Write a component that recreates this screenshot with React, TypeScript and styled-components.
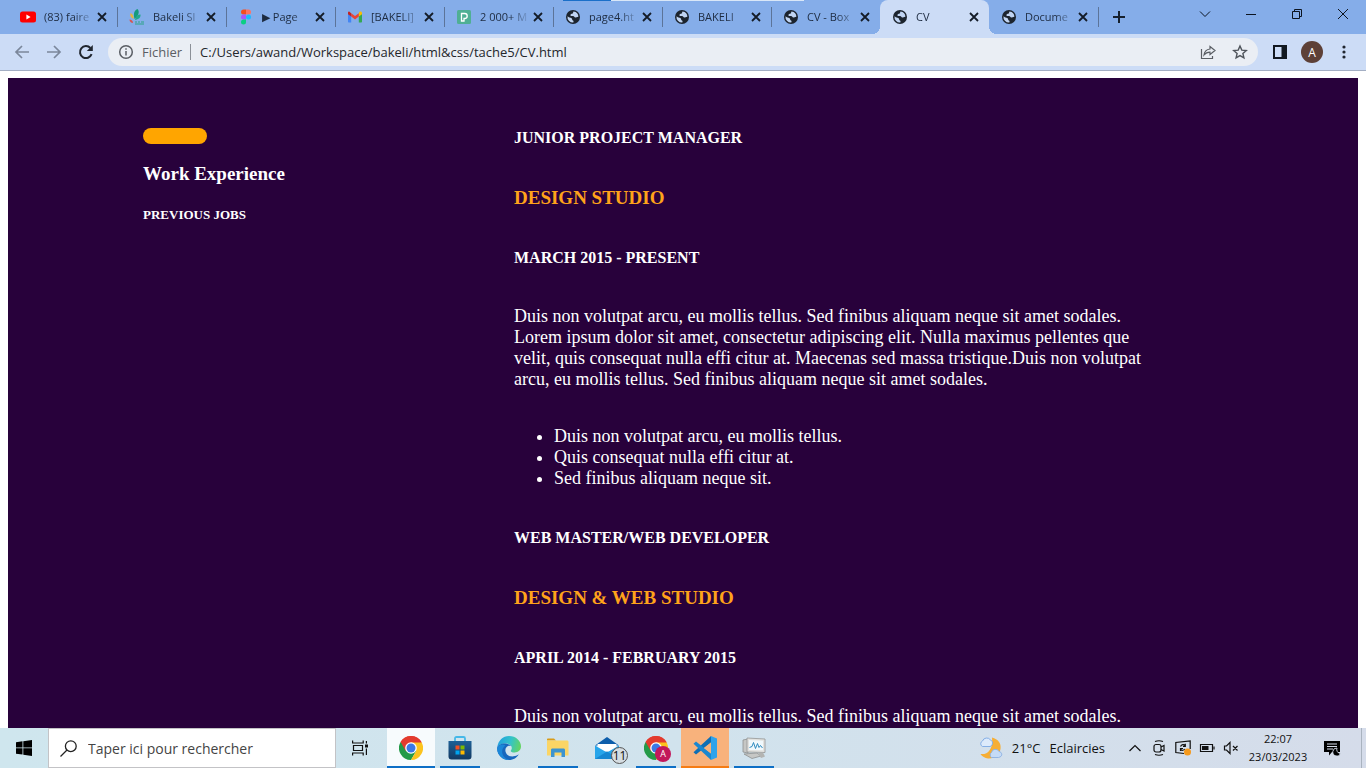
import React from "react";
import styled, { createGlobalStyle, css } from "styled-components";

const GlobalStyle = createGlobalStyle`
  *, *::before, *::after { box-sizing: border-box; }
  body { margin: 0; background: #fff; overflow: hidden; }
  button, input { font: inherit; color: inherit; }
  button { border: 0; padding: 0; background: none; display: flex; align-items: center; justify-content: center; }
  svg { display: block; flex: none; }
`;

const ui = `"Segoe UI", "Open Sans", "Noto Sans", sans-serif`;

const Screen = styled.div`
  display: flex;
  flex-direction: column;
  height: 100vh;
  overflow: hidden;
  font-family: ${ui};
`;

/* ---------- browser frame ---------- */

const TabStrip = styled.header`
  position: relative;
  display: flex;
  flex: none;
  height: 34px;
  padding-left: 8px;
  background: #85ade9;
  color: #1d2b40;
`;

const LoadingBar = styled.div`
  position: absolute;
  top: 0;
  left: 563px;
  width: 241px;
  height: 1px;
  background: linear-gradient(90deg, #1a6fc9 48px, #d9e7f8 48px);
`;

const Tabs = styled.nav`
  display: flex;
`;

const Tab = styled.div<{ $active?: boolean; $divided?: boolean }>`
  position: relative;
  display: flex;
  align-items: center;
  width: 109px;
  padding: 0 7px 0 12px;
  ${(p) =>
    p.$divided &&
    css`
      &::after {
        content: "";
        position: absolute;
        right: -1px;
        top: 7px;
        width: 1px;
        height: 20px;
        background: #5c7499;
      }
    `}
  ${(p) =>
    p.$active &&
    css`
      background: #ccdcf6;
      border-radius: 8px 8px 0 0;
      &::before,
      &::after {
        content: "";
        position: absolute;
        bottom: 0;
        width: 8px;
        height: 8px;
      }
      &::before {
        left: -8px;
        background: radial-gradient(circle at 0 0, transparent 8px, #ccdcf6 8px);
      }
      &::after {
        right: -8px;
        background: radial-gradient(circle at 100% 0, transparent 8px, #ccdcf6 8px);
      }
    `}
`;

const TabTitle = styled.button`
  flex: 1;
  min-width: 0;
  margin-left: 8px;
  justify-content: flex-start;
  overflow: hidden;
  font-size: 11px;
  line-height: 16px;
  white-space: nowrap;
  mask-image: linear-gradient(90deg, #000 60%, transparent);
`;

const IconButton = styled.button<{ $size?: number }>`
  flex: none;
  width: ${(p) => p.$size ?? 16}px;
  height: ${(p) => p.$size ?? 16}px;
`;

const NewTab = styled(IconButton)`
  align-self: center;
  margin-left: 13px;
  color: #16202e;
`;

const WindowButtons = styled.div`
  display: flex;
  align-items: center;
  margin-left: auto;
  height: 28px;
  color: #0c1420;
`;

const WindowButton = styled.button`
  width: 46px;
  height: 28px;
`;

const Toolbar = styled.div`
  display: flex;
  flex: none;
  align-items: center;
  height: 37px;
  padding: 0 12px;
  background: #ccdcf6;
  border-bottom: 1px solid #a3aec3;
`;

const NavButtons = styled.div`
  display: flex;
  gap: 12px;
  margin-right: 12px;
`;

const AddressBar = styled.div`
  display: flex;
  flex: 1;
  align-items: center;
  height: 28px;
  padding: 0 8px 0 10px;
  border-radius: 14px;
  background: #eaeef4;
  font-size: 13px;
  line-height: 20px;
  color: #5a5e64;
`;

const SchemeLabel = styled.label`
  margin-left: 8px;
  padding-right: 8px;
  border-right: 1px solid #8b9098;
  line-height: 16px;
`;

const AddressInput = styled.input`
  flex: 1;
  min-width: 0;
  padding: 0;
  margin-left: 9px;
  border: 0;
  outline: 0;
  background: none;
  color: #24272c;
`;

const AddressActions = styled.div`
  display: flex;
  gap: 12px;
`;

const ToolbarActions = styled.div`
  display: flex;
  align-items: center;
  gap: 11px;
  margin-left: 12px;
`;

const Avatar = styled.button`
  width: 22px;
  height: 22px;
  border-radius: 50%;
  background: #5d4037;
  color: #fff;
  font-size: 12px;
`;

/* ---------- CV page ---------- */

const Viewport = styled.main`
  flex: 1;
  min-height: 0;
  overflow: hidden;
  padding: 7px 8px 0;
  background: #fff;
`;

const Resume = styled.div`
  display: grid;
  grid-template-columns: 331px minmax(0, 640px);
  column-gap: 40px;
  padding: 50px 10%;
  background: #28013b;
  color: #fff;
  font-family: "Times New Roman", "Liberation Serif", serif;
`;

const Pill = styled.div`
  width: 64px;
  height: 16px;
  border-radius: 8px;
  background: #ffa500;
`;

const SectionTitle = styled.h2`
  margin: 20px 0 21px;
  font-size: 19px;
  line-height: 20px;
`;

const SectionNote = styled.h3`
  margin: 0;
  font-size: 13px;
  line-height: 20px;
`;

const Role = styled.h4`
  margin: 0 0 40px;
  font-size: 16px;
  line-height: 20px;
`;

const Company = styled.h3`
  margin: 0 0 40px;
  font-size: 19px;
  line-height: 20px;
  color: #ffa31a;
`;

const Period = styled(Role)`
  margin-bottom: 38px;
`;

const Summary = styled.p`
  margin: 0 0 36px;
  font-size: 18px;
  line-height: 21px;
`;

const Duties = styled.ul`
  margin: 0 0 39px;
  padding-left: 40px;
  font-size: 18px;
  line-height: 21px;
`;

/* ---------- taskbar ---------- */

const Taskbar = styled.footer`
  display: flex;
  flex: none;
  height: 40px;
  background: linear-gradient(90deg, #cfe6ee, #d1e3ed 50%, #d5dcea);
  color: #111;
`;

const StartButton = styled.button`
  width: 48px;
`;

const SearchBox = styled.label`
  display: flex;
  align-items: center;
  gap: 11px;
  width: 288px;
  padding-left: 11px;
  border: 1px solid #c3c3c6;
  background: #fff;
  font-size: 14px;
`;

const SearchInput = styled.input`
  flex: 1;
  min-width: 0;
  padding: 0;
  border: 0;
  outline: 0;
  background: none;
  &::placeholder { color: #444; opacity: 1; }
`;

const TaskView = styled.button`
  width: 48px;
`;

const Apps = styled.nav`
  display: flex;
  gap: 1px;
  margin-left: 3px;
`;

const AppButton = styled.button<{ $state?: "open" | "active" | "alert" }>`
  position: relative;
  width: 48px;
  height: 40px;
  background: ${(p) => (p.$state === "active" ? "#f7fbfd" : p.$state === "alert" ? "#f8b27c" : "none")};
  ${(p) =>
    p.$state &&
    css`
      &::after {
        content: "";
        position: absolute;
        bottom: 0;
        left: ${p.$state === "open" ? 4 : 0}px;
        right: ${p.$state === "open" ? 4 : 0}px;
        height: 2px;
        background: ${p.$state === "alert" ? "#f57c14" : "#0d6fc6"};
      }
    `}
`;

const Badge = styled.span<{ $tone: "count" | "profile" }>`
  position: absolute;
  display: grid;
  place-items: center;
  border-radius: 50%;
  ${(p) =>
    p.$tone === "count"
      ? css`
          right: 3px;
          top: 19px;
          width: 17px;
          height: 17px;
          border: 1px solid #555;
          background: #d5dde2;
          font-size: 12px;
          line-height: 15px;
        `
      : css`
          right: 9px;
          top: 18px;
          width: 16px;
          height: 16px;
          background: #c2185b;
          color: #fff;
          font-size: 9px;
          line-height: 16px;
        `}
`;

const Tray = styled.div`
  display: flex;
  align-items: center;
  margin-left: auto;
`;

const Weather = styled.button`
  gap: 9px;
  margin-right: 22px;
  font-size: 13px;
  line-height: 20px;
`;

const TrayIcons = styled.div`
  display: flex;
  gap: 8px;
`;

const Clock = styled.time`
  width: 68px;
  margin-left: 5px;
  font-size: 11px;
  line-height: 18px;
  text-align: center;
`;

const NotificationButton = styled.button`
  width: 49px;
  height: 40px;
  padding-right: 8px;
`;

const DesktopPeek = styled.button`
  width: 5px;
  height: 40px;
  border-left: 1px solid #a9b3bf;
`;

/* ---------- icons ---------- */

const Cross = () => (
  <svg width="10" height="10" viewBox="0 0 10 10" stroke="#141c28" strokeWidth="1.8">
    <path d="M1 1l8 8M9 1L1 9" />
  </svg>
);

const Globe = () => (
  <svg width="16" height="16" viewBox="0 0 16 16">
    <circle cx="8" cy="8" r="7" fill="#1c242e" />
    <path
      d="M8.6 2.4C7.6 3.2 8.6 4 7.6 4.6 6.6 5 5.4 5 5.4 6.2 5.4 7 6.6 7 8 7c1.4 0 1.2 1.6 2.4 1.6.8 0 1.4-.8 3-.8a5.6 5.6 0 0 0-4.8-5.4zM2.5 7.2c1.3 1.3 2.8 1.2 3.8 1.7 1.4.7.3 2.1 1.6 2.5.9.3.7 1.2.4 2.200A5.600 5.600 0 0 1 2.500 7.200z"
      fill="#c0d4f2"
    />
  </svg>
);

const YouTube = () => (
  <svg width="16" height="16" viewBox="0 0 16 16">
    <rect y="2.500" width="16" height="11" rx="2.500" fill="#f00" />
    <path d="M6.400 5.600v4.800L10.600 8z" fill="#fff" />
  </svg>
);

const Bakeli = () => (
  <svg width="16" height="16" viewBox="0 0 16 16">
    <path d="M5.500 10C4 4.500 5.500 1 8.500 0c2.500 2.500 1 7-3 10z" fill="#159a7c" />
    <path d="M6 11c.5-3.500 2.500-5.500 5.500-5.500.5 3-2 5-5.500 5.500z" fill="#21a88c" />
    <path d="M4.500 10C1.500 8.500.8 6.500 1.500 4 3.800 5 5 7.500 4.500 10z" fill="#e8b53a" />
    <path d="M4 14C2 14 .5 12.500.5 10.500c2 0 3.500 1.200 3.500 3.500z" fill="#d9534f" />
    <path d="M6 13h2m1 0h2m1 0h3M6 15h9" stroke="#4aa6a8" strokeWidth="1.300" />
  </svg>
);

const Figma = () => (
  <svg width="16" height="16" viewBox="0 0 16 16">
    <path d="M8 .5H5.500a2.500 2.500 0 0 0 0 5H8z" fill="#f24e1e" />
    <path d="M8 .5h2.500a2.500 2.500 0 0 1 0 5H8z" fill="#ff7262" />
    <path d="M8 5.500H5.500a2.500 2.500 0 0 0 0 5H8z" fill="#a259ff" />
    <circle cx="10.500" cy="8" r="2.500" fill="#1abcfe" />
    <path d="M8 10.500H5.500A2.500 2.500 0 1 0 8 13z" fill="#0acf83" />
  </svg>
);

const Gmail = () => (
  <svg width="16" height="16" viewBox="0 0 16 16">
    <path d="M1 4v8.500c0 .6.4 1 1 1h2.200V7z" fill="#4285f4" />
    <path d="M15 4v8.500c0 .6-.4 1-1 1h-2.200V7z" fill="#34a853" />
    <path d="M11.800 4.200V7.500L15 5.200V4c0-1.400-1.500-2-2.500-1.200z" fill="#fbbc04" />
    <path d="M4.200 7.500V4.200L8 7l3.800-2.800v3.300L8 10.500z" fill="#ea4335" />
    <path d="M1 4v1.200l3.200 2.300V4.200l-1.700-1.400C1.500 2 1 3 1 4z" fill="#c5221f" />
  </svg>
);

const Pexels = () => (
  <svg width="16" height="16" viewBox="0 0 16 16">
    <rect x="1" y="1" width="14" height="14" rx="1.500" fill="#4faf94" />
    <path d="M5.500 12V4.500h3.200a2.500 2.500 0 0 1 0 5H8V12z" fill="none" stroke="#fff" strokeWidth="1.300" />
  </svg>
);

const Arrow = ({ flip }: { flip?: boolean }) => (
  <svg width="16" height="16" viewBox="0 0 16 16" fill="none" stroke="#7b879b" strokeWidth="1.700">
    {flip ? <path d="M1 8h13M8 2l6 6-6 6" /> : <path d="M15 8H2M8 2L2 8l6 6" />}
  </svg>
);

const Reload = () => (
  <svg width="16" height="16" viewBox="0 0 16 16">
    <path d="M13.600 10.200A6 6 0 1 1 12.400 4" fill="none" stroke="#20262f" strokeWidth="2" />
    <path d="M14.800 1v6H8.800z" fill="#20262f" />
  </svg>
);

const Info = () => (
  <svg width="16" height="16" viewBox="0 0 16 16" fill="none" stroke="#5a5e64" strokeWidth="1.500">
    <circle cx="8" cy="8" r="6.300" />
    <path d="M8 7v4.500M8 4.200v1.600" />
  </svg>
);

const Share = () => (
  <svg width="16" height="16" viewBox="0 0 16 16" fill="none" stroke="#5a5e64" strokeWidth="1.200">
    <path d="M1.500 5v9.500h11V12" />
    <path d="M10 2.500l5 4-5 4V8.200c-2.500 0-4.300.6-6 2.800.4-3.500 2.400-5.600 6-6z" />
  </svg>
);

const Star = () => (
  <svg width="16" height="16" viewBox="0 0 16 16" fill="none" stroke="#4f545b" strokeWidth="1.400">
    <path d="M8 2l1.800 4.100 4.500.4-3.400 3 1 4.400L8 11.600l-3.900 2.300 1-4.400-3.400-3 4.500-.4z" />
  </svg>
);

const SidePanel = () => (
  <svg width="14" height="14" viewBox="0 0 14 14">
    <rect x="1" y="1" width="12" height="12" fill="none" stroke="#111820" strokeWidth="2" />
    <path d="M8.500 1H13v12H8.500z" fill="#111820" />
  </svg>
);

const Dots = () => (
  <svg width="16" height="16" viewBox="0 0 16 16" fill="#20262f">
    <circle cx="8" cy="3" r="1.600" />
    <circle cx="8" cy="8" r="1.600" />
    <circle cx="8" cy="13" r="1.600" />
  </svg>
);

const Windows = () => (
  <svg width="16" height="16" viewBox="0 0 16 16" fill="#000">
    <path d="M0 2.200L6.500 1.300v6.200H0zM7.300 1.200L16 0v7.500H7.300zM0 8.300h6.500v6.300L0 13.700zM7.300 8.300H16V16l-8.700-1.200z" />
  </svg>
);

const Magnifier = () => (
  <svg width="17" height="17" viewBox="0 0 17 17" fill="none" stroke="#222" strokeWidth="1.300">
    <circle cx="10.800" cy="6.200" r="5.400" />
    <path d="M7 10l-6.500 6.500" />
  </svg>
);

const TaskViewIcon = () => (
  <svg width="16" height="16" viewBox="0 0 16 16" fill="none" stroke="#111" strokeWidth="1.200">
    <path d="M.6 .5v2.500h10.600V.5M.6 15.500v-2.500h10.600v2.500M1.500 5.500h9v5h-9zM14.400 1v2.600M14.400 8.500V15" />
    <path d="M13 4.500h3v3h-3z" fill="#111" stroke="none" />
  </svg>
);

const Chrome = () => (
  <svg width="24" height="24" viewBox="0 0 24 24">
    <path d="M12 12L1.600 6A12 12 0 0 1 22.400 6z" fill="#e33b2e" />
    <path d="M12 12L1.600 6A12 12 0 0 0 12 24l5.200-9z" fill="#249a48" />
    <path d="M12 12l5.200 3L12 24A12 12 0 0 0 22.400 6H12z" fill="#fcc31e" />
    <path d="M1.600 6l5.200 9L12 6.500h10.600L22.400 6A12 12 0 0 0 1.600 6z" fill="#e33b2e" />
    <circle cx="12" cy="12" r="5.800" fill="#fff" />
    <circle cx="12" cy="12" r="4.500" fill="#3b78e7" />
  </svg>
);

const Store = () => (
  <svg width="24" height="24" viewBox="0 0 24 24">
    <defs>
      <linearGradient id="store-bag" x1="0" x2="0" y1="0" y2="1">
        <stop stopColor="#1d6096" />
        <stop offset="1" stopColor="#133a63" />
      </linearGradient>
    </defs>
    <path d="M7 6V2.500C7 1.500 7.500 1 8.500 1h7c1 0 1.500.5 1.500 1.500V6" fill="none" stroke="#45b8e8" strokeWidth="1.800" />
    <path d="M.5 5h23v15.500a3 3 0 0 1-3 3h-17a3 3 0 0 1-3-3z" fill="url(#store-bag)" />
    <path d="M7.500 9.500h4v4h-4z" fill="#f25022" />
    <path d="M12.500 9.500h4v4h-4z" fill="#7fba00" />
    <path d="M7.500 14.500h4v4h-4z" fill="#00a4ef" />
    <path d="M12.500 14.500h4v4h-4z" fill="#ffb900" />
  </svg>
);

const Edge = () => (
  <svg width="24" height="24" viewBox="0 0 24 24">
    <defs>
      <linearGradient id="edge-top" x1="0" x2="1" y1=".3" y2=".5">
        <stop stopColor="#1f9fe0" />
        <stop offset=".55" stopColor="#34c3c9" />
        <stop offset="1" stopColor="#63d463" />
      </linearGradient>
    </defs>
    <path d="M.3 11C1.200 4.500 6 0 12 0c7 0 12 5 12 10.300 0 4-3 6.200-6.300 6.200-2.700 0-4-.8-4-1.600 0-.8 1.100-1.200 1.100-3C14.800 9.500 12 7.500 8.500 7.500 4.500 7.500 1.500 9 .3 11z" fill="url(#edge-top)" />
    <path d="M.2 12C.5 9 4 7.500 7.500 7.500c3.500 0 5.800 1.300 6.800 2.700-1-.5-2.300-.6-3.300-.2-2 .8-3 3-2.500 5.500.7 3.500 4.500 6 9.500 4.500 1.600-.5 3-1.300 3.800-1.800C20 21.500 16.500 24 12 24 5.500 24-.2 18.500.2 12z" fill="#1767bd" />
    <path d="M8.500 9.500c-3 2-4 5-3 8.500 1 3.300 3.700 5.600 7 6C5.500 24-.2 18.500.2 12c.8-3 5-4.500 8.300-2.500z" fill="#1b87d8" />
  </svg>
);

const Explorer = () => (
  <svg width="22" height="20" viewBox="0 0 22 20">
    <path d="M0 1.500C0 .7.500.5 1 .5h6l2 2H0z" fill="#d99c18" />
    <path d="M0 2.500h20c.8 0 1.500.5 1.500 1.500v13.500H0z" fill="#fbd565" />
    <path d="M4 19V12c0-1 .6-1.500 1.500-1.500h11c.9 0 1.500.5 1.500 1.500v7h-3.500v-4.500h-7V19z" fill="#3d94cf" />
  </svg>
);

const Mail = () => (
  <svg width="24" height="23" viewBox="0 0 24 23">
    <path d="M0 8.500L12 0l12 8.500z" fill="#0d5eab" />
    <path d="M2.500 7h19v7h-19z" fill="#fff" />
    <path d="M0 8.500L12 15.500 24 8.500V22H0z" fill="#27a5ea" />
    <path d="M0 22l12-7.500L24 22z" fill="#1687d2" />
  </svg>
);

const VsCode = () => (
  <svg width="24" height="24" viewBox="0 0 24 24">
    <path d="M18 0l6 2.500v19L18 24z" fill="#2fa3ec" />
    <path d="M18 0v6.500L3 18.500.5 16.300z" fill="#0f6fb5" />
    <path d="M18 24v-6.500L3 5.500.5 7.700z" fill="#1b87cf" />
    <path d="M18 6.500v11L10.800 12z" fill="#f8b27c" />
  </svg>
);

const Monitor = () => (
  <svg width="24" height="22" viewBox="0 0 24 22">
    <path d="M1 3l5-1v14l-5-1zM2 17l13-1 4 3-9 2.500z" fill="#c6c7c5" stroke="#8e9090" strokeWidth=".8" />
    <path d="M5 1l18 1v13.500L5 15z" fill="#e2e2df" stroke="#949694" strokeWidth=".8" />
    <path d="M7 3l14 .7v9.600L7 13z" fill="#f0f8fc" />
    <path d="M7.500 10.500l2.500-1 1.500-4 2 6 2-5 1.500 4 1.500-2 2 2.500" fill="none" stroke="#2d8bc0" />
    <path d="M16 16l5-.5 2 4-4 1.500z" fill="#b3b4b2" />
  </svg>
);

const WeatherIcon = () => (
  <svg width="24" height="23" viewBox="0 0 24 23">
    <path d="M13 .5c6 1.500 9.500 6 8.500 11.500C20.500 18 15 22 9 21.500c-3-.3-6-2-7.500-4.500C8 18 14.500 13 13 .5z" fill="#f6ae35" />
    <path d="M3.500 9.500a3 3 0 0 1 0-5.500A4.500 4.500 0 0 1 11.500 3c2.500.5 3 5.500-.5 6.500z" fill="#dceafb" stroke="#7ba8e4" strokeWidth=".9" />
    <path d="M12.500 20.500a3 3 0 0 1 0-5 4 4 0 0 1 7.500-1c3 .3 4.500 5-.5 6z" fill="#c5dbf6" stroke="#8bb0e2" strokeWidth=".9" />
  </svg>
);

const trayIcon = { width: 16, height: 16, viewBox: "0 0 16 16", fill: "none", stroke: "#111", strokeWidth: 1.2 };

const Up = () => (
  <svg {...trayIcon}><path d="M2.500 11L8 5.500l5.500 5.500" /></svg>
);
const Meet = () => (
  <svg {...trayIcon}>
    <path d="M4 1.500q4-1.500 8 0M4 14.500q4 1.500 8 0" />
    <rect x="3" y="4.500" width="7" height="7.500" rx="2" />
    <path d="M10 7l3-1.500v5.500L10 9.500" />
  </svg>
);
const Update = () => (
  <svg {...trayIcon}>
    <path d="M9 13.500L.8 12.500V2.500L15.200 1v8" />
    <path d="M10 5.500c-1-1.300-3.500-1.200-4.500 1M10.300 3.800v2.500H8M5.800 9.500c1 1.200 3 1 4-.5M5.500 11V8.500H8" />
    <circle cx="12.500" cy="12" r="3.500" fill="#f5991c" stroke="none" />
  </svg>
);
const Battery = () => (
  <svg {...trayIcon}>
    <path d="M1.500 4.500h12v7h-12z" />
    <path d="M3 6h6.500v4H3z" fill="#111" stroke="none" />
    <path d="M15 6.500v3" />
  </svg>
);
const Muted = () => (
  <svg {...trayIcon}>
    <path d="M1.500 6h2L7 2.500v11L3.500 10h-2zM10 6l4.500 4.500M14.500 6L10 10.500" />
  </svg>
);
const Notifications = () => (
  <svg width="17" height="17" viewBox="0 0 17 17">
    <path d="M0 1h16v11H8l-3 3.500V12H0z" fill="#000" />
    <path d="M3 4h10M3 6.500h10M3 9h6" stroke="#d5dcea" />
    <path d="M13 8a4 4 0 1 0 3.500 5.500A4 4 0 0 1 13 8z" fill="#000" stroke="#d5dcea" strokeWidth=".9" />
  </svg>
);

/* ---------- content ---------- */

const tabs = [
  { title: "(83) faire", icon: <YouTube /> },
  { title: "Bakeli Sl", icon: <Bakeli /> },
  { title: "▶ Page", icon: <Figma /> },
  { title: "[BAKELI]", icon: <Gmail /> },
  { title: "2 000+ M", icon: <Pexels /> },
  { title: "page4.ht", icon: <Globe /> },
  { title: "BAKELI", icon: <Globe /> },
  { title: "CV - Box", icon: <Globe /> },
  { title: "CV", icon: <Globe />, active: true },
  { title: "Docume", icon: <Globe /> },
];

const summary =
  "Duis non volutpat arcu, eu mollis tellus. Sed finibus aliquam neque sit amet sodales. Lorem ipsum dolor sit amet, consectetur adipiscing elit. Nulla maximus pellentes que velit, quis consequat nulla effi citur at. Maecenas sed massa tristique.Duis non volutpat arcu, eu mollis tellus. Sed finibus aliquam neque sit amet sodales.";

const jobs = [
  {
    role: "JUNIOR PROJECT MANAGER",
    company: "DESIGN STUDIO",
    period: "MARCH 2015 - PRESENT",
    duties: [
      "Duis non volutpat arcu, eu mollis tellus.",
      "Quis consequat nulla effi citur at.",
      "Sed finibus aliquam neque sit.",
    ],
  },
  {
    role: "WEB MASTER/WEB DEVELOPER",
    company: "DESIGN & WEB STUDIO",
    period: "APRIL 2014 - FEBRUARY 2015",
    duties: [],
  },
];

export default function App() {
  return (
    <Screen>
      <GlobalStyle />
      <TabStrip>
        <LoadingBar />
        <Tabs aria-label="Onglets">
          {tabs.map((tab, i) => (
            <Tab key={tab.title + i} $active={tab.active} $divided={!tab.active && !tabs[i + 1]?.active}>
              {tab.icon}
              <TabTitle>{tab.title}</TabTitle>
              <IconButton aria-label="Fermer l'onglet"><Cross /></IconButton>
            </Tab>
          ))}
        </Tabs>
        <NewTab aria-label="Nouvel onglet">
          <svg width="12" height="12" viewBox="0 0 12 12" stroke="currentColor" strokeWidth="2"><path d="M6 0v12M0 6h12" /></svg>
        </NewTab>
        <WindowButtons>
          <WindowButton aria-label="Rechercher dans les onglets">
            <svg width="12" height="12" viewBox="0 0 12 12" fill="none" stroke="currentColor"><path d="M1 3.500l5 5 5-5" /></svg>
          </WindowButton>
          <WindowButton aria-label="Réduire">
            <svg width="10" height="10" viewBox="0 0 10 10" stroke="currentColor"><path d="M0 5.500h10" /></svg>
          </WindowButton>
          <WindowButton aria-label="Restaurer">
            <svg width="10" height="10" viewBox="0 0 10 10" fill="none" stroke="currentColor"><path d="M.5 2.500h7v7h-7zM2.500 2.500v-2h7v7h-2" /></svg>
          </WindowButton>
          <WindowButton aria-label="Fermer">
            <svg width="10" height="10" viewBox="0 0 10 10" stroke="currentColor"><path d="M0 0l10 10M10 0L0 10" /></svg>
          </WindowButton>
        </WindowButtons>
      </TabStrip>

      <Toolbar>
        <NavButtons>
          <IconButton $size={20} aria-label="Précédent"><Arrow /></IconButton>
          <IconButton $size={20} aria-label="Suivant"><Arrow flip /></IconButton>
          <IconButton $size={20} aria-label="Actualiser"><Reload /></IconButton>
        </NavButtons>
        <AddressBar>
          <Info />
          <SchemeLabel htmlFor="address">Fichier</SchemeLabel>
          <AddressInput id="address" defaultValue="C:/Users/awand/Workspace/bakeli/html&css/tache5/CV.html" />
          <AddressActions>
            <IconButton $size={20} aria-label="Partager"><Share /></IconButton>
            <IconButton $size={20} aria-label="Favoris"><Star /></IconButton>
          </AddressActions>
        </AddressBar>
        <ToolbarActions>
          <IconButton $size={20} aria-label="Panneau latéral"><SidePanel /></IconButton>
          <Avatar>A</Avatar>
          <IconButton $size={20} aria-label="Menu"><Dots /></IconButton>
        </ToolbarActions>
      </Toolbar>

      <Viewport>
        <Resume>
          <aside>
            <Pill />
            <SectionTitle>Work Experience</SectionTitle>
            <SectionNote>PREVIOUS JOBS</SectionNote>
          </aside>
          <section>
            {jobs.map((job) => (
              <article key={job.company}>
                <Role>{job.role}</Role>
                <Company>{job.company}</Company>
                <Period>{job.period}</Period>
                <Summary>{summary}</Summary>
                {job.duties.length > 0 && (
                  <Duties>
                    {job.duties.map((duty) => <li key={duty}>{duty}</li>)}
                  </Duties>
                )}
              </article>
            ))}
          </section>
        </Resume>
      </Viewport>

      <Taskbar>
        <StartButton aria-label="Démarrer"><Windows /></StartButton>
        <SearchBox>
          <Magnifier />
          <SearchInput placeholder="Taper ici pour rechercher" aria-label="Rechercher" />
        </SearchBox>
        <TaskView aria-label="Affichage des tâches"><TaskViewIcon /></TaskView>
        <Apps aria-label="Applications">
          <AppButton $state="active" aria-label="Chrome"><Chrome /></AppButton>
          <AppButton $state="open" aria-label="Store"><Store /></AppButton>
          <AppButton aria-label="Edge"><Edge /></AppButton>
          <AppButton $state="open" aria-label="Explorateur"><Explorer /></AppButton>
          <AppButton aria-label="Courrier"><Mail /><Badge $tone="count">11</Badge></AppButton>
          <AppButton $state="open" aria-label="Chrome, profil A"><Chrome /><Badge $tone="profile">A</Badge></AppButton>
          <AppButton $state="alert" aria-label="Visual Studio Code"><VsCode /></AppButton>
          <AppButton $state="open" aria-label="Moniteur"><Monitor /></AppButton>
        </Apps>
        <Tray>
          <Weather><WeatherIcon /><span>21°C</span><span>Eclaircies</span></Weather>
          <TrayIcons>
            <IconButton aria-label="Icônes cachées"><Up /></IconButton>
            <IconButton aria-label="Caméra"><Meet /></IconButton>
            <IconButton aria-label="Mise à jour"><Update /></IconButton>
            <IconButton aria-label="Batterie"><Battery /></IconButton>
            <IconButton aria-label="Volume"><Muted /></IconButton>
          </TrayIcons>
          <Clock dateTime="2023-03-23T22:07">22:07<br />23/03/2023</Clock>
          <NotificationButton aria-label="Notifications"><Notifications /></NotificationButton>
          <DesktopPeek aria-label="Afficher le bureau" />
        </Tray>
      </Taskbar>
    </Screen>
  );
}
